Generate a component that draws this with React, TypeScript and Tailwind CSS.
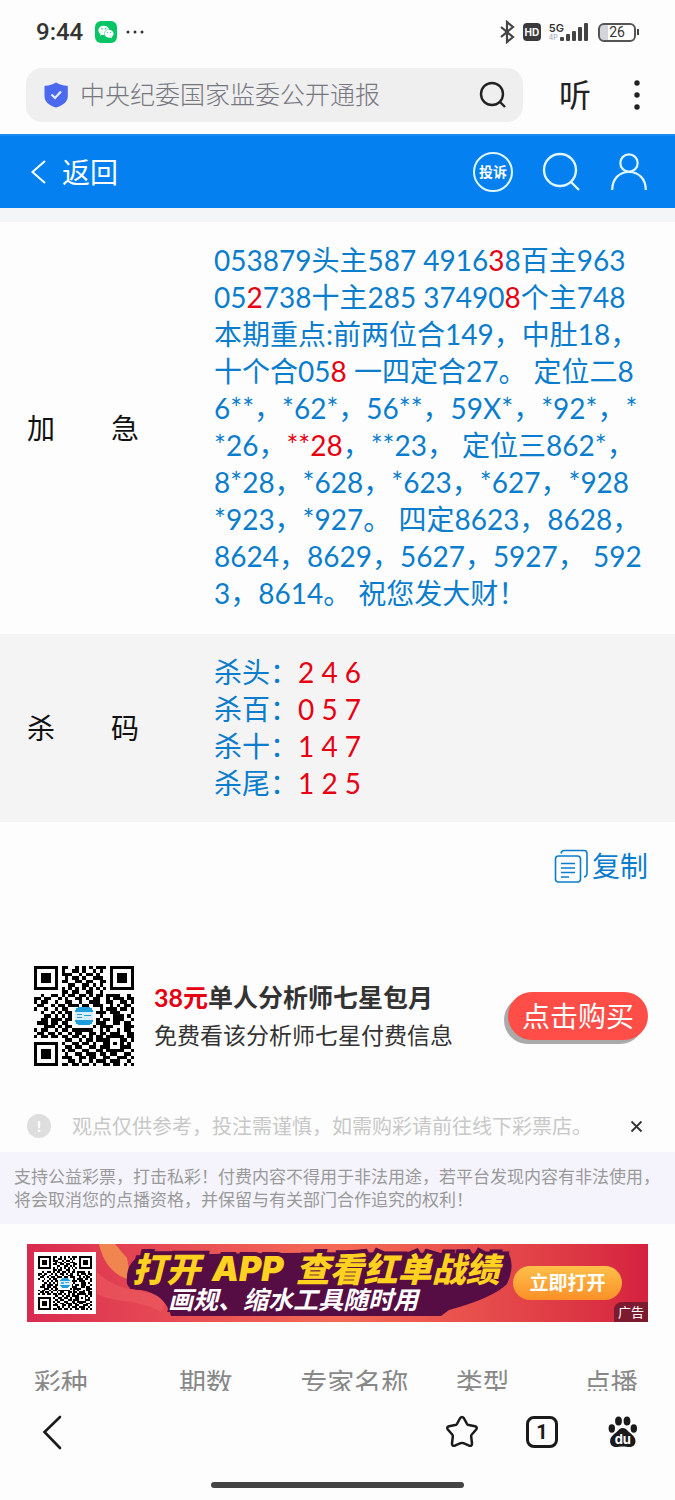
import { FaWeixin } from "react-icons/fa";

const FONT = "font-[Lato,'Noto_Sans_CJK_SC',sans-serif]";

// [text, isRed]
type Part = [string, boolean?];

const urgentLines: Part[][] = [
    [["053879头主587 4916"], ["3", true], ["8百主963"]],
    [["05"], ["2", true], ["738十主285 37490"], ["8", true], ["个主748"]],
    [["本期重点:前两位合149，中肚18，"]],
    [["十个合05"], ["8", true], [" 一四定合27。 定位二8"]],
    [["6**，*62*，56**，59X*，*92*，*"]],
    [["*26，"], ["**28", true], ["，**23， 定位三862*，"]],
    [["8*28，*628，*623，*627，*928"]],
    [["*923，*927。 四定8623，8628，"]],
    [["8624，8629，5627，5927， 592"]],
    [["3，8614。 祝您发大财！"]],
];

const killLines: Part[][] = [
    [["杀头："], ["2 4 6", true]],
    [["杀百："], ["0 5 7", true]],
    [["杀十："], ["1 4 7", true]],
    [["杀尾："], ["1 2 5", true]],
];

const qrRows = [
    "11111110110010101011101111111",
    "10000010100110100101001000001",
    "10111010111001011010001011101",
    "10111010010110100111001011101",
    "10111010110011011001101011101",
    "10000010001100110101001000001",
    "11111110101010101010101111111",
    "00000000110110011001000000000",
    "00100110101101101011011110010",
    "11011001010011010110010111011",
    "10110010011001001110011001101",
    "01100101101110110111001010110",
    "10010010110000000001011101101",
    "00100101011000000011101110001",
    "00011010101000000001000111010",
    "00110111011000000010110111001",
    "01110110110000000011100110110",
    "00011101011000000101111000111",
    "10110010110111111001010010110",
    "01101101001011001101101110011",
    "10110110110110101011011111011",
    "00000000011001011011110001101",
    "11111110100110110100110101010",
    "10000010011011001101110001110",
    "10111010101100110011011111001",
    "10111010010011011101101100110",
    "10111010111001101100110011101",
    "10000010001101001011101110010",
    "11111110110110110100110110101",
];

function QrCode({ className }: { className: string }) {
    return (
        <svg viewBox="0 0 29 29" className={className} shapeRendering="crispEdges">
            {qrRows.map((row, y) =>
                row.split("").map((cell, x) =>
                    cell === "1" ? <rect key={`${x}-${y}`} x={x} y={y} width="1" height="1" fill="#000" /> : null
                )
            )}
            <rect x="12" y="12" width="5" height="5" rx="1" fill="#1e9ddf" />
            <rect x="12" y="13.2" width="5" height="2.4" fill="#d8effa" />
            <path d="M12.5 14h1.4M12.5 15h1.4M14.4 14.4h2.1" stroke="#1e9ddf" strokeWidth="0.4" />
        </svg>
    );
}

function Lines({ lines }: { lines: Part[][] }) {
    return (
        <>
            {lines.map((line, i) => (
                <p key={i} className="whitespace-pre">
                    {line.map(([text, red], j) => (
                        <span key={j} className={red ? "text-[#e60012]" : ""}>{text}</span>
                    ))}
                </p>
            ))}
        </>
    );
}

function StatusBar() {
    return (
        <div className="flex h-16 items-center justify-between px-9 text-[#333]">
            <div className="flex items-center">
                <span className="font-[Roboto,sans-serif] text-2xl font-medium">9:44</span>
                <span className="ml-3 flex size-[22px] items-center justify-center rounded-md bg-[#07c565] text-white">
                    <FaWeixin size={16} />
                </span>
                <svg width="20" height="6" viewBox="0 0 20 6" className="ml-2" fill="#333">
                    <circle cx="3" cy="3" r="1.5" />
                    <circle cx="10" cy="3" r="1.5" />
                    <circle cx="17" cy="3" r="1.5" />
                </svg>
            </div>
            <div className="flex items-center">
                <svg width="16" height="24" viewBox="0 0 16 24" fill="none" stroke="#444" strokeWidth="2.2">
                    <path d="M2 7l12 10-6 5V2l6 5L2 17" />
                </svg>
                <span className="ml-2 flex h-[18px] w-[18px] items-center justify-center rounded bg-[#3a3a3a] font-[Inter,sans-serif] text-[10px] font-bold text-white">
                    HD
                </span>
                <div className="ml-2 flex items-end">
                    <div className="flex flex-col font-[Inter,sans-serif] leading-3">
                        <span className="text-[11px] font-semibold">5G</span>
                        <span className="text-[7px] leading-2 text-gray-400">4P</span>
                    </div>
                    <svg width="30" height="20" viewBox="0 0 30 20" className="-ml-1" fill="#444">
                        <rect x="0" y="15" width="4" height="4" rx="1" />
                        <rect x="6" y="12" width="4" height="7" rx="1" />
                        <rect x="12" y="9" width="4" height="10" rx="1" />
                        <rect x="18" y="5" width="4" height="14" rx="1" />
                        <rect x="24" y="1" width="4" height="18" rx="1" />
                    </svg>
                </div>
                <div className="ml-2 flex items-center">
                    <span className="flex h-[19px] w-[38px] items-center justify-center rounded-md border-2 border-[#555] bg-linear-to-r from-gray-300 from-25% to-white to-25% font-[Roboto,sans-serif] text-[14px]">
                        26
                    </span>
                    <span className="ml-px h-1.5 w-0.5 bg-[#444]" />
                </div>
            </div>
        </div>
    );
}

function SearchBar() {
    return (
        <div className="flex items-center pt-1 pr-8 pb-3 pl-[26px] text-[#222]">
            <div className="flex h-[54px] flex-1 items-center rounded-2xl bg-[#efefef] pr-4 pl-[18px]">
                <svg width="24" height="26" viewBox="0 0 24 26" className="shrink-0">
                    <path d="M12 0.5c3 2 7 3 11 3.2.5 0 .8.5.8 1V14c0 6-5 9.5-11.8 11.5C5.2 23.5.5 20 .5 14V4.700c0-.5.3-1 .8-1C5 3.500 9 2.500 12 .5z" fill="#4a69ee" />
                    <path d="M7.5 12.5l3.500 3.500 6-6.500" fill="none" stroke="#e6ecff" strokeWidth="2.2" />
                </svg>
                <input
                    aria-label="搜索"
                    defaultValue="中央纪委国家监委公开通报"
                    className="ml-3 min-w-0 flex-1 bg-transparent text-[25px] font-light text-[#77777f] outline-none"
                />
                <button aria-label="搜索按钮">
                    <svg width="28" height="28" viewBox="0 0 28 28" fill="none" stroke="#222" strokeWidth="2.4">
                        <circle cx="13" cy="13" r="11" />
                        <path d="M20.5 20.5l5.500 5.500" />
                    </svg>
                </button>
            </div>
            <button className="ml-9 text-[32px] leading-10">听</button>
            <button aria-label="更多" className="ml-10">
                <svg width="12" height="32" viewBox="0 0 12 32" fill="#222">
                    <circle cx="6" cy="4" r="2.7" />
                    <circle cx="6" cy="16" r="2.7" />
                    <circle cx="6" cy="28" r="2.7" />
                </svg>
            </button>
        </div>
    );
}

function SiteHeader() {
    return (
        <header className="flex h-[74px] items-center justify-between border-t-2 border-[#1b8df2] bg-[#0480f0] pr-7 pl-[30px] text-white">
            <a href="#" className="flex items-center gap-[14px] text-[28px] leading-10">
                <svg width="18" height="26" viewBox="0 0 18 26" fill="none" stroke="currentColor" strokeWidth="2">
                    <path d="M15 2L2.5 13 15 24" />
                </svg>
                返回
            </a>
            <div className="flex items-center">
                <button className="flex size-10 items-center justify-center rounded-full border-2 border-[#dff6ff] text-[14px] leading-5 font-bold">
                    投诉
                </button>
                <button aria-label="搜索" className="ml-[29px]">
                    <svg width="40" height="40" viewBox="0 0 40 40" fill="none" stroke="#dff6ff" strokeWidth="2.4">
                        <circle cx="18" cy="18" r="16" />
                        <path d="M28.5 29.5L37 38" />
                    </svg>
                </button>
                <button aria-label="我的" className="ml-[29px]">
                    <svg width="36" height="38" viewBox="0 0 36 38" fill="none" stroke="#dff6ff" strokeWidth="2.2">
                        <circle cx="18" cy="10" r="8.7" />
                        <path d="M1.2 37C1.200 26 8 19 18 19s16.800 7 16.800 18" />
                    </svg>
                </button>
            </div>
        </header>
    );
}

function InfoTable() {
    return (
        <table className="w-full text-[28px] leading-[37px]">
            <tbody>
                <tr>
                    <th className="w-[214px] pl-[27px] font-normal text-[#111]">
                        <div className="flex w-28 justify-between"><span>加</span><span>急</span></div>
                    </th>
                    <td className="pt-5 pb-[22px] text-[#0b7dcc]"><Lines lines={urgentLines} /></td>
                </tr>
                <tr className="bg-[#f4f4f4]">
                    <th className="pl-[27px] font-normal text-[#111]">
                        <div className="flex w-28 justify-between"><span>杀</span><span>码</span></div>
                    </th>
                    <td className="py-5 text-[#0b7dcc]"><Lines lines={killLines} /></td>
                </tr>
            </tbody>
        </table>
    );
}

function Promo() {
    return (
        <section className="mt-20 flex items-center pr-[27px] pl-[34px]">
            <QrCode className="size-[100px]" />
            <div className="ml-5 flex-1 text-[#333]">
                <p className="text-[25px] leading-[38px] font-bold">
                    <span className="text-[#e60012]">38元</span>单人分析师七星包月
                </p>
                <p className="text-[23px] leading-[38px]">免费看该分析师七星付费信息</p>
            </div>
            <button className="h-12 rounded-full bg-[#ff4d48] px-[14px] text-[28px] leading-10 text-white shadow-[-4px_4px_0_#aaa]">
                点击购买
            </button>
        </section>
    );
}

function AdBanner() {
    return (
        <section className="relative mx-[27px] mt-5 flex h-[78px] items-center overflow-hidden bg-linear-to-r from-[#d92a50] via-[#f56a56] via-50% to-[#d5213f] pl-[7px]">
            <svg viewBox="0 0 621 78" preserveAspectRatio="none" className="absolute inset-0 size-full">
                <path d="M72 0c4 18 14 32 32 36L100 14 88 0z" fill="#f0854f" />
                <path d="M70 28c20 20 40 16 70 26l-6 14C110 54 90 60 70 50z" fill="#ec5c5f" opacity="0.6" />
                <path d="M100 40q-2-22 14-28 200-6 368-2 6 12-2 30-14 14-58 26l-8 6H144q-6-22-30-26-12 0-14-6z" fill="#560d43" />
            </svg>
            <div className="relative bg-white p-1">
                <QrCode className="size-[54px]" />
            </div>
            <div className="relative ml-9 flex flex-1 flex-col whitespace-nowrap italic">
                <p className="flex gap-3 text-[34px] leading-8 font-black text-[#ffd21f] [-webkit-text-stroke:8px_#560d43] [paint-order:stroke]">
                    <span>打开</span>
                    <span className="font-[Inter]">APP</span>
                    <span>查看红单战绩</span>
                </p>
                <p className="pl-9 text-[25px] leading-7 font-bold text-white [-webkit-text-stroke:4px_#560d43] [paint-order:stroke]">
                    画规、缩水工具随时用
                </p>
            </div>
            <button className="relative mr-[26px] h-[34px] w-[109px] rounded-full bg-linear-to-b from-[#ffc04a] to-[#fa8f26] text-[19px] leading-6 font-bold text-white">
                立即打开
            </button>
            <span className="absolute right-0 bottom-0 rounded-tl-lg bg-[#7c1a30] px-1 text-[13px] leading-5 text-white">广告</span>
        </section>
    );
}

function ExpertTable() {
    return (
        <div className="h-[69px] overflow-hidden pt-[41px]">
            <table className="w-full table-fixed text-[27px] leading-10 text-[#888]">
                <thead>
                    <tr>
                        <th className="w-[18%] font-normal">彩种</th>
                        <th className="w-[25%] font-normal">期数</th>
                        <th className="w-[19%] font-normal">专家名称</th>
                        <th className="w-[19%] font-normal">类型</th>
                        <th className="w-[19%] font-normal">点播</th>
                    </tr>
                </thead>
            </table>
        </div>
    );
}

function BottomBar() {
    return (
        <footer className="bg-[#fdfdfd] pb-3">
            <nav className="flex h-[82px] items-center pr-9 pl-10 text-[#1a1a1a]">
                <button aria-label="后退" className="mr-auto">
                    <svg width="24" height="36" viewBox="0 0 24 36" fill="none" stroke="currentColor" strokeWidth="2.6" strokeLinecap="round">
                        <path d="M20 3L4.5 18 20 34" />
                    </svg>
                </button>
                <button aria-label="收藏">
                    <svg width="34" height="34" viewBox="0 0 34 34" fill="none" stroke="currentColor" strokeWidth="2.5" strokeLinejoin="round">
                        <path d="M15.2 3Q17 .8 18.800 3L22 8.800q.6 1 1.800 1.300l6.200 1.200q2.800.8 1.200 3.200l-4.400 5q-.8 1-.6 2.200l.8 6.800q0 3-2.800 2.200L18.400 28.200q-1.400-.6-2.800 0l-5.800 2.500q-2.800.8-2.800-2.200l.8-6.800q.2-1.200-.6-2.200l-4.400-5q-1.600-2.400 1.200-3.200l6.200-1.200q1.200-.3 1.800-1.300z" />
                    </svg>
                </button>
                <button className="ml-[47px] flex size-8 items-center justify-center rounded-lg border-[3px] border-current font-[Roboto,sans-serif] text-[20px] leading-6 font-bold">
                    1
                </button>
                <button aria-label="百度" className="ml-[49px]">
                    <svg width="32" height="32" viewBox="0 0 32 32" fill="currentColor">
                        <ellipse cx="4.8" cy="12.500" rx="3.200" ry="4.200" />
                        <ellipse cx="11.500" cy="5" rx="3.400" ry="4.500" />
                        <ellipse cx="20" cy="5" rx="3.400" ry="4.500" />
                        <ellipse cx="26.800" cy="12.500" rx="3.200" ry="4.200" />
                        <path d="M15.800 12c2.200 0 3.700 1.100 5 2.800 2 2.700 7.700 5.200 7.700 10.400 0 3.400-2.300 5.800-5.700 5.800-2.600 0-4.400-.5-7-.5s-4.400.5-7 .5C5.400 31 3.100 28.600 3.100 25.200c0-5.200 5.700-7.700 7.700-10.400 1.300-1.700 2.800-2.800 5-2.800z" />
                        <text x="15.800" y="28" textAnchor="middle" fontFamily="Inter, sans-serif" fontWeight="700" fontSize="13" fill="#fff">du</text>
                    </svg>
                </button>
            </nav>
            <div className="mx-auto mt-[9px] h-1.5 w-[253px] rounded-full bg-[#444]" />
        </footer>
    );
}

export default function App() {
    return (
        <div className={`w-full bg-[#fdfdfd] ${FONT}`}>
            <StatusBar />
            <SearchBar />
            <SiteHeader />
            <div className="h-[14px] bg-[#f3f5f7]" />
            <main>
                <InfoTable />
                <div className="mt-6 flex justify-end pr-[27px]">
                    <button className="flex h-10 items-center gap-1 text-[28px] leading-10 text-[#0b7dcc]">
                        <svg width="34" height="34" viewBox="0 0 34 34" fill="none" stroke="currentColor" strokeWidth="1.6">
                            <path d="M7 4.5Q7.500 1.500 10 1.500h20q3 0 3 3v19q0 4-3 4.500" />
                            <rect x="1.5" y="7" width="25" height="26" rx="3" />
                            <path d="M7 14.5h14M7 19h14M7 23.500h14M7 28h8" />
                        </svg>
                        复制
                    </button>
                </div>
                <Promo />
                <div className="mt-[34px] flex h-[52px] items-center pr-[30px] pl-[27px]">
                    <span className="flex size-6 items-center justify-center rounded-full bg-[#dedede] text-[16px] font-bold text-white">!</span>
                    <p className="ml-[21px] flex-1 text-[20px] leading-6 text-[#c8c8c8]">
                        观点仅供参考，投注需谨慎，如需购彩请前往线下彩票店。
                    </p>
                    <button aria-label="关闭" className="p-0.5">
                        <svg width="13" height="13" viewBox="0 0 13 13" stroke="#333" strokeWidth="1.8">
                            <path d="M1.5 1.5l10 10M11.500 1.500l-10 10" />
                        </svg>
                    </button>
                </div>
                <div className="bg-[#f5f4fd] px-[14px] py-[13px] text-[17px] leading-[23px] whitespace-nowrap text-[#999]">
                    <p>支持公益彩票，打击私彩！付费内容不得用于非法用途，若平台发现内容有非法使用，</p>
                    <p>将会取消您的点播资格，并保留与有关部门合作追究的权利！</p>
                </div>
                <AdBanner />
                <ExpertTable />
            </main>
            <BottomBar />
        </div>
    );
}
